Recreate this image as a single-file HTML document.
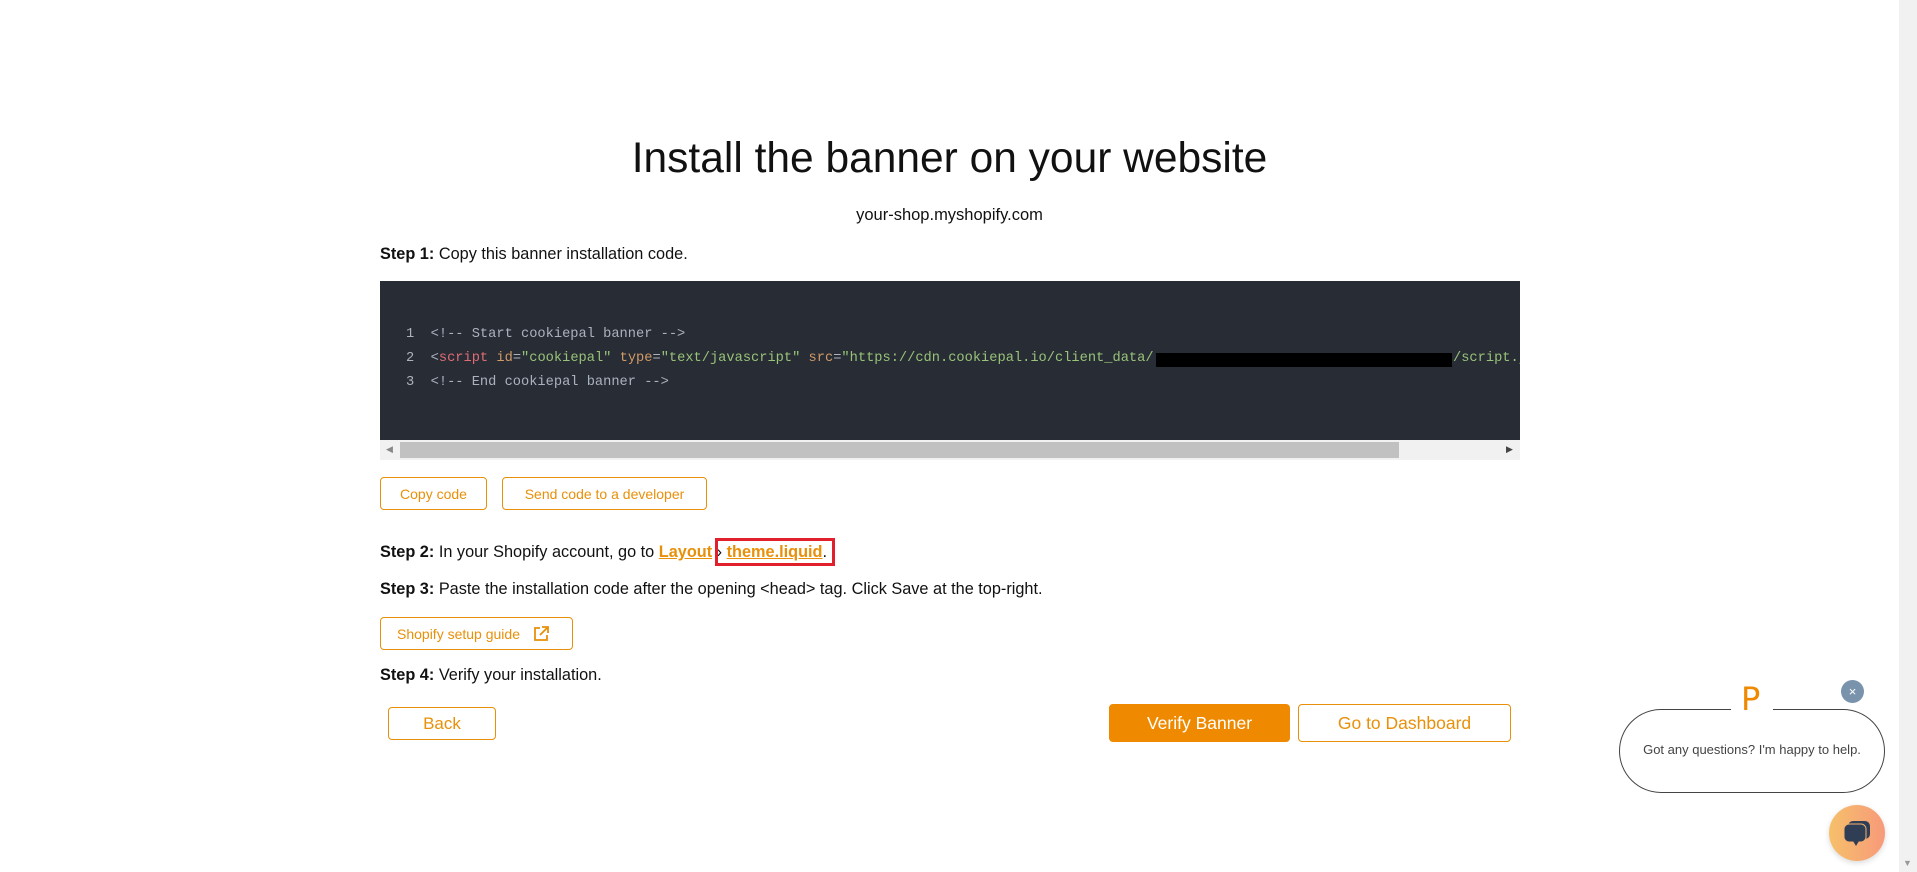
<!DOCTYPE html>
<html><head><meta charset="utf-8"><style>
*{margin:0;padding:0;box-sizing:border-box}
body{width:1917px;height:872px;background:#fff;font-family:"Liberation Sans",sans-serif;color:#111;position:relative;overflow:hidden}
.a{position:absolute;white-space:nowrap}
.btn{position:absolute;border:1.5px solid #e8900a;border-radius:4px;color:#e8900a;display:flex;align-items:center;justify-content:center;font-size:14px;background:#fff}
.code{position:absolute;left:380px;top:281px;width:1140px;height:159px;background:#282c34;font-family:"Liberation Mono",monospace;font-size:13.7px;color:#abb2bf;overflow:hidden}
.code div{position:absolute;white-space:pre}
.tag{color:#e06c75}.at{color:#d19a66}.st{color:#98c379}
b{font-weight:bold}
u{color:#e8900a;font-weight:bold}
.bx{position:relative}
.bx i{position:absolute;left:-12px;right:-8px;top:-5px;bottom:-5px;border:3px solid #e0202a}
.s{font-size:16.3px}
</style></head><body>
<div class="a" style="left:0;width:1899px;text-align:center;top:135px;font-size:42.5px;color:#111">Install the banner on your website</div>
<div class="a" style="left:0;width:1899px;text-align:center;top:206px;font-size:16.5px">your-shop.myshopify.com</div>
<div class="a s" style="left:380px;top:245px"><b>Step 1:</b> Copy this banner installation code.</div>
<div class="code">
<div style="left:26px;top:46px">1  &lt;!-- Start cookiepal banner --&gt;</div>
<div style="left:26px;top:70px">2  &lt;<span class="tag">script</span> <span class="at">id</span>=<span class="st">"cookiepal"</span> <span class="at">type</span>=<span class="st">"text/javascript"</span> <span class="at">src</span>=<span class="st">"https://cdn.cookiepal.io/client_data/</span></div>
<div style="left:776px;top:72px;width:296px;height:14px;background:#000"></div>
<div style="left:1073px;top:70px" class="st">/script.js"</div>
<div style="left:26px;top:94px">3  &lt;!-- End cookiepal banner --&gt;</div>
</div>
<div class="a" style="left:380px;top:440px;width:1140px;height:20px;background:#f1f1f1"></div>
<div class="a" style="left:400px;top:442px;width:999px;height:16px;background:#c1c1c1"></div>
<div class="a" style="left:386px;top:444px;font-size:9px;color:#888">◀</div>
<div class="a" style="left:1506px;top:444px;font-size:9px;color:#444">▶</div>
<div class="btn" style="left:380px;top:477px;width:107px;height:33px">Copy code</div>
<div class="btn" style="left:502px;top:477px;width:205px;height:33px">Send code to a developer</div>
<div class="a s" style="left:380px;top:543px"><b>Step 2:</b> In your Shopify account, go to <u>Layout</u> › <span class="bx"><u>theme.liquid</u>.<i></i></span></div>
<div class="a s" style="left:380px;top:580px"><b>Step 3:</b> Paste the installation code after the opening &lt;head&gt; tag. Click Save at the top-right.</div>
<div class="btn" style="left:380px;top:617px;width:193px;height:33px;justify-content:flex-start;padding-left:16px">Shopify setup guide
<svg width="18" height="18" viewBox="0 0 18 18" style="margin-left:12px" fill="none" stroke="#e8900a" stroke-width="1.8"><path d="M8 3H3v12h12v-5M10 2h6v6M16 2l-8 8"/></svg></div>
<div class="a s" style="left:380px;top:666px"><b>Step 4:</b> Verify your installation.</div>
<div class="btn" style="left:388px;top:707px;width:108px;height:33px;font-size:17px">Back</div>
<div class="btn" style="left:1109px;top:704px;width:181px;height:38px;font-size:17.5px;background:#ef8a00;border-color:#ef8a00;color:#fff">Verify Banner</div>
<div class="btn" style="left:1298px;top:704px;width:213px;height:38px;font-size:17.5px">Go to Dashboard</div>
<div class="a" style="left:1619px;top:709px;width:266px;height:84px;border:1.3px solid #444;border-radius:42px"></div>
<div class="a" style="left:1731px;top:700px;width:42px;height:14px;background:#fff"></div>
<div class="a" style="left:1741px;top:680px;font-size:32px;color:#ef8a00;font-family:'DejaVu Sans',sans-serif">P</div>
<div class="a" style="left:1619px;top:742px;width:266px;text-align:center;font-size:13px;color:#444">Got any questions? I'm happy to help.</div>
<div class="a" style="left:1841px;top:680px;width:23px;height:23px;border-radius:50%;background:#7993ad;color:#fff;font-size:13px;text-align:center;line-height:23px">×</div>
<div class="a" style="left:1829px;top:805px;width:56px;height:56px;border-radius:50%;background:linear-gradient(90deg,#f6c06a,#f79a7a);box-shadow:0 2px 6px rgba(0,0,0,.15)"></div>
<svg class="a" style="left:1843px;top:820px" width="30" height="28" viewBox="0 0 30 28"><rect x="5" y="1" width="22" height="18" rx="5" fill="#2f3e55"/><rect x="1" y="4" width="22" height="18" rx="5" fill="#2f3e55" stroke="#f6b070" stroke-width="1"/><path d="M10 21l3 5 3-5z" fill="#2f3e55"/></svg>
<div class="a" style="left:1899px;top:0;width:18px;height:872px;background:#f1f1f1"></div>
<div class="a" style="left:1903px;top:858px;font-size:9px;color:#999">▼</div>
</body></html>
